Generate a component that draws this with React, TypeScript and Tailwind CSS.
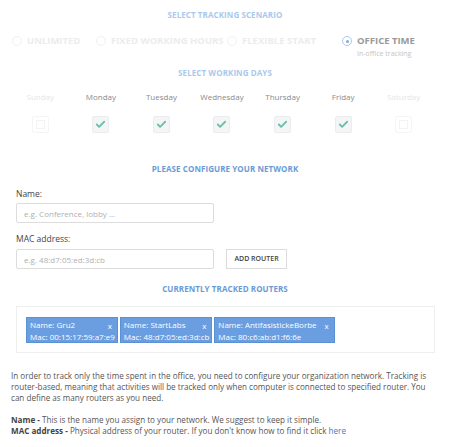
import { Check } from "lucide-react";

const SCENARIOS = [
  { label: "Unlimited", active: false, w: "w-[84px]" },
  { label: "Fixed working hours", active: false, w: "w-[131px]" },
  { label: "Flexible start", active: false, w: "w-[115px]" },
  { label: "Office time", active: true, w: "w-[90px]" },
];

const DAYS = [
  { name: "Sunday", on: false },
  { name: "Monday", on: true },
  { name: "Tuesday", on: true },
  { name: "Wednesday", on: true },
  { name: "Thursday", on: true },
  { name: "Friday", on: true },
  { name: "Saturday", on: false },
];

const ROUTERS = [
  { name: "Gru2", mac: "00:15:17:59:a7:e9" },
  { name: "StartLabs", mac: "48:d7:05:ed:3d:cb" },
  { name: "AntifasistickeBorbe", mac: "80:c6:ab:d1:f6:6e" },
];

function SectionTitle({ children, className = "" }: { children: React.ReactNode; className?: string }) {
  return (
    <h2 className={`text-center text-[8px] font-bold uppercase tracking-[0.01em] leading-none ${className}`}>
      {children}
    </h2>
  );
}

export default function App() {
  return (
    <div
      className="w-[450px] h-[447px] bg-white overflow-hidden text-[#555]"
      style={{ fontFamily: '"Open Sans", "Liberation Sans", sans-serif' }}
    >
      <SectionTitle className="pt-[11px] text-[#a9c9ec]">Select tracking scenario</SectionTitle>

      <div className="flex pl-[12px] mt-[16px] h-[28px]">
        {SCENARIOS.map((s) => (
          <div key={s.label} className={`flex items-start gap-[5px] shrink-0 ${s.w}`}>
            <span
              className={`mt-[1px] w-[10px] h-[10px] shrink-0 rounded-full border flex items-center justify-center ${
                s.active ? "border-[#a9c9ec]" : "border-[#f0f0f0]"
              }`}
            >
              {s.active && <span className="w-[3px] h-[3px] rounded-full bg-[#7fa9dc]" />}
            </span>
            <div className="flex flex-col">
              <span
                className={`text-[9.5px] font-bold uppercase leading-[12px] whitespace-nowrap ${
                  s.active ? "text-[#999]" : "text-[#ececec]"
                }`}
              >
                {s.label}
              </span>
              {s.active && <span className="text-[7px] text-[#c4c4c4] leading-[12px] mt-[1px]">In-office tracking</span>}
            </div>
          </div>
        ))}
      </div>

      <SectionTitle className="mt-[6px] text-[#a9c9ec]">Select working days</SectionTitle>

      <div className="grid grid-cols-7 w-[424px] ml-[10px] mt-[14px]">
        {DAYS.map((d) => (
          <div key={d.name} className="flex flex-col items-center">
            <span className={`text-[8px] leading-[12px] ${d.on ? "text-[#8a8a8a]" : "text-[#e6e6e6]"}`}>{d.name}</span>
            <span
              className={`mt-[13px] w-[17px] h-[17px] rounded-[2px] flex items-center justify-center ${
                d.on ? "bg-[#f4f5f6] border border-[#ececec]" : "border border-[#f5f5f5]"
              }`}
            >
              {d.on ? (
                <Check className="w-[11px] h-[11px] text-[#6cc0a8]" strokeWidth={4} />
              ) : (
                <span className="w-[9px] h-[9px] border border-[#f3f3f3]" />
              )}
            </span>
          </div>
        ))}
      </div>

      <SectionTitle className="mt-[32px] text-[#6a9bd5]">Please configure your network</SectionTitle>

      <div className="px-[16px] mt-[15px]">
        <label className="block text-[8.5px] leading-[12px] text-[#444]">Name:</label>
        <input
          placeholder="e.g. Conference, lobby ..."
          className="block mt-[3px] w-[198px] h-[20px] border border-[#dcdcdc] rounded-[2px] px-[7px] text-[8px] placeholder:text-[#b0b0b0] outline-none"
        />
        <label className="block mt-[10px] text-[8.5px] leading-[12px] text-[#444]">MAC address:</label>
        <div className="flex items-center gap-[12px] mt-[4px]">
          <input
            placeholder="e.g. 48:d7:05:ed:3d:cb"
            className="block w-[198px] h-[20px] border border-[#dcdcdc] rounded-[2px] px-[7px] text-[8px] placeholder:text-[#b0b0b0] outline-none"
          />
          <button className="h-[20px] w-[61px] border border-[#dcdcdc] bg-white text-[7px] font-semibold uppercase text-[#444]">
            Add router
          </button>
        </div>
      </div>

      <SectionTitle className="mt-[16px] text-[#6a9bd5]">Currently tracked routers</SectionTitle>

      <div className="mx-[16px] mt-[13px] h-[47px] w-[419px] border border-[#eeeeee] pl-[9px] pt-[10px] flex gap-[2px]">
        {ROUTERS.map((r) => (
          <div
            key={r.name}
            className="h-[26px] bg-[#6a9ee0] border border-[#5c90d4] text-white text-[8px] leading-[11px] pl-[3px] pr-[2px] pt-[1px] flex flex-col whitespace-nowrap"
          >
            <div className="flex justify-between gap-[8px] pr-[3px]">
              <span>Name: {r.name}</span>
              <span className="pt-[1px]">x</span>
            </div>
            <span>Mac: {r.mac}</span>
          </div>
        ))}
      </div>

      <div className="px-[11px] mt-[17px] text-[8.1px] leading-[11px] text-[#555]">
        <p>
          In order to track only the time spent in the office, you need to configure your organization network. Tracking
          is router-based, meaning that activities will be tracked only when computer is connected to specified router.
          You can define as many routers as you need.
        </p>
        <p className="mt-[11px]">
          <b className="font-bold text-[#444]">Name -</b> This is the name you assign to your network. We suggest to keep
          it simple.
          <br />
          <b className="font-bold text-[#444]">MAC address -</b> Physical address of your router. If you don't know how to
          find it click <a className="text-[#3b7bc8]">here</a>
        </p>
      </div>
    </div>
  );
}
